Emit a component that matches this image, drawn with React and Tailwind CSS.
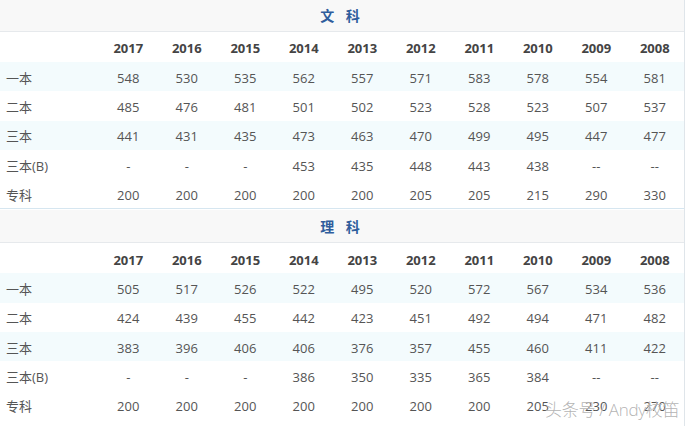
const years = ['2017', '2016', '2015', '2014', '2013', '2012', '2011', '2010', '2009', '2008']

const sections = [
  {
    title: '文 科',
    titleH: 'h-[32px]',
    rows: [
      ['一本', '548', '530', '535', '562', '557', '571', '583', '578', '554', '581'],
      ['二本', '485', '476', '481', '501', '502', '523', '528', '523', '507', '537'],
      ['三本', '441', '431', '435', '473', '463', '470', '499', '495', '447', '477'],
      ['三本(B)', '-', '-', '-', '453', '435', '448', '443', '438', '--', '--'],
      ['专科', '200', '200', '200', '200', '200', '205', '205', '215', '290', '330'],
    ],
  },
  {
    title: '理 科',
    titleH: 'h-[33px] mt-[1px]',
    rows: [
      ['一本', '505', '517', '526', '522', '495', '520', '572', '567', '534', '536'],
      ['二本', '424', '439', '455', '442', '423', '451', '492', '494', '471', '482'],
      ['三本', '383', '396', '406', '406', '376', '357', '455', '460', '411', '422'],
      ['三本(B)', '-', '-', '-', '386', '350', '335', '365', '384', '--', '--'],
      ['专科', '200', '200', '200', '200', '200', '200', '200', '205', '230', '270'],
    ],
  },
]

const cols = 'grid grid-cols-[99px_repeat(10,58.5px)] items-center pt-[4px]'

function Section({ s, last }) {
  return (
    <div className={last ? '' : 'border-b border-[#d6e6f0]'}>
      <div
        className={`${s.titleH} flex items-center justify-center border-b border-[#e6e9ec] bg-[#f8f8f8] text-[14px] font-bold tracking-[4px] text-[#2f5d9c]`}
      >
        {s.title}
      </div>
      <div className={`${cols} h-[30px] text-[13px] font-bold text-[#444]`}>
        <div />
        {years.map((y) => (
          <div key={y} className="text-center">{y}</div>
        ))}
      </div>
      {s.rows.map((r, i) => (
        <div
          key={r[0]}
          className={`${cols} h-[29.25px] text-[13px] text-[#555] ${i === 0 || i === 2 ? 'bg-[#f3fbfd]' : 'bg-white'}`}
        >
          <div className="pl-[6px]">{r[0]}</div>
          {r.slice(1).map((v, j) => (
            <div key={j} className="text-center">{v}</div>
          ))}
        </div>
      ))}
    </div>
  )
}

export default function App() {
  return (
    <div
      className="relative h-[427px] w-[689px] overflow-hidden bg-white"
      style={{ fontFamily: '"Open Sans", "Noto Sans CJK SC", sans-serif' }}
    >
      <div className="w-[685px] border-r border-[#dfe5ea]">
        {sections.map((s, i) => (
          <Section key={s.title} s={s} last={i === sections.length - 1} />
        ))}
        <div className="h-[6px]" />
      </div>
      {/* watermark */}
      <div
        className="absolute left-[545px] top-[397px] text-[17px] font-light tracking-[-0.3px] text-[#a0a0a0]/80"
        style={{ textShadow: '0 0 1px #fff' }}
      >
        头条号 / Andy校笛
      </div>
    </div>
  )
}
